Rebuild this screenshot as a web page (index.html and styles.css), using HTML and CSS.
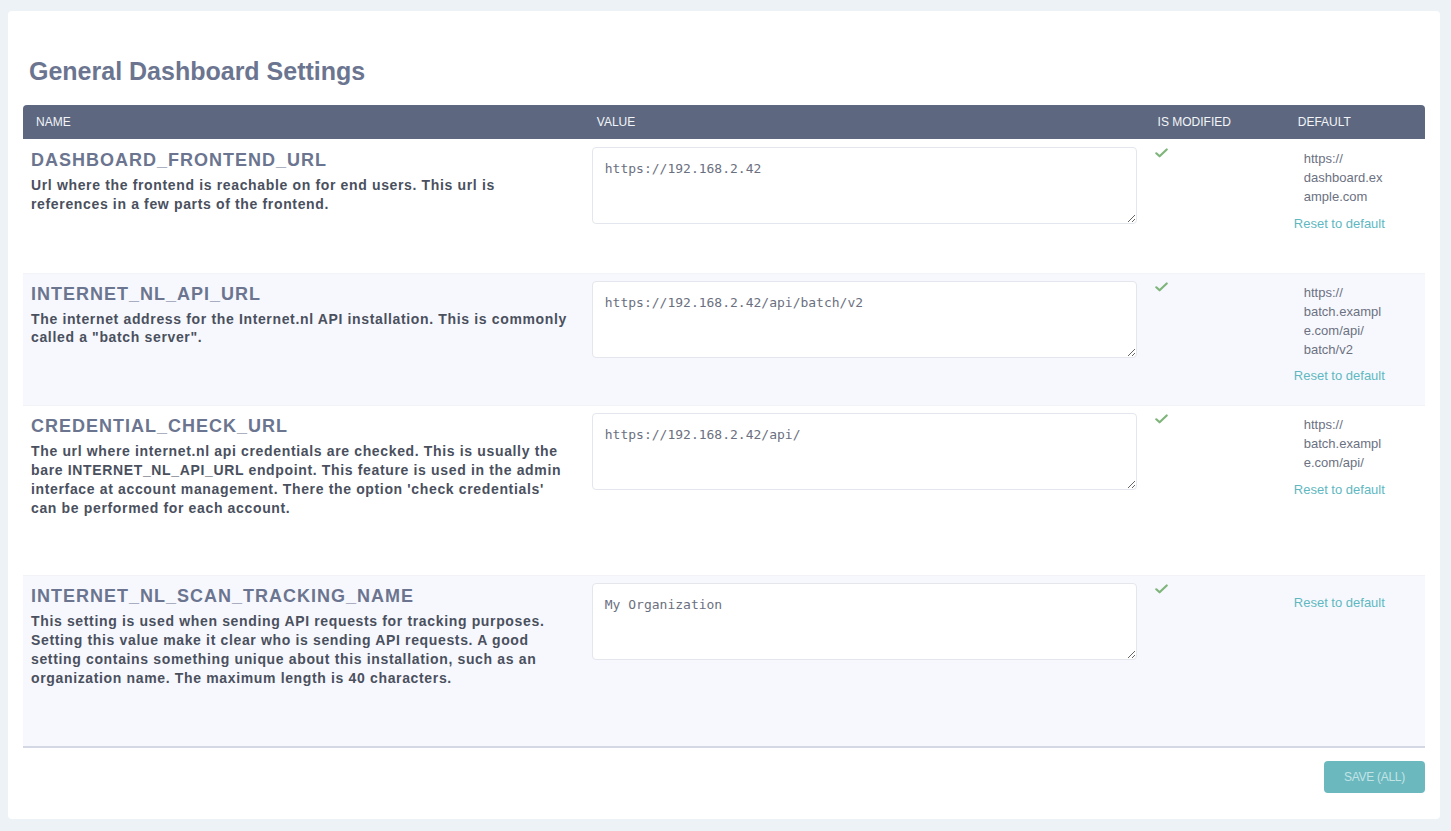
FILE: index.html
```html
<!DOCTYPE html>
<html lang="en">
<head>
<meta charset="utf-8">
<title>General Dashboard Settings</title>
<link rel="stylesheet" href="styles.css">
</head>
<body>
<div class="card">
  <h1 class="title">General Dashboard Settings</h1>
  <table class="settings">
    <colgroup>
      <col class="c-name"><col class="c-value"><col class="c-mod"><col class="c-def">
    </colgroup>
    <thead>
      <tr><th>Name</th><th>Value</th><th>Is modified</th><th>Default</th></tr>
    </thead>
    <tbody>
      <tr>
        <td class="name-cell">
          <div class="name">DASHBOARD_FRONTEND_URL</div>
          <div class="desc">Url where the frontend is reachable on for end users. This url is references in a few parts of the frontend.</div>
        </td>
        <td class="value-cell"><textarea class="value">https://192.168.2.42</textarea></td>
        <td class="mod-cell"><svg class="check" width="13" height="10" viewBox="0 0 13 10"><path d="M1.3 5.3 L4.6 8.3 L11.7 1.5" fill="none" stroke="#7fb57b" stroke-width="2.2" stroke-linecap="round" stroke-linejoin="round"/></svg></td>
        <td class="def-cell">
          <div class="def-value">https://<wbr>dashboard.example.com</div>
          <a class="reset" href="#">Reset to default</a>
        </td>
      </tr>
      <tr class="alt">
        <td class="name-cell">
          <div class="name">INTERNET_NL_API_URL</div>
          <div class="desc">The internet address for the Internet.nl API installation. This is commonly called a "batch server".</div>
        </td>
        <td class="value-cell"><textarea class="value">https://192.168.2.42/api/batch/v2</textarea></td>
        <td class="mod-cell"><svg class="check" width="13" height="10" viewBox="0 0 13 10"><path d="M1.3 5.3 L4.6 8.3 L11.7 1.5" fill="none" stroke="#7fb57b" stroke-width="2.2" stroke-linecap="round" stroke-linejoin="round"/></svg></td>
        <td class="def-cell">
          <div class="def-value">https://<wbr>batch.example.com/api/<wbr>batch/v2</div>
          <a class="reset" href="#">Reset to default</a>
        </td>
      </tr>
      <tr>
        <td class="name-cell">
          <div class="name">CREDENTIAL_CHECK_URL</div>
          <div class="desc">The url where internet.nl api credentials are checked. This is usually the bare INTERNET_NL_API_URL endpoint. This feature is used in the admin interface at account management. There the option 'check credentials' can be performed for each account.</div>
        </td>
        <td class="value-cell"><textarea class="value">https://192.168.2.42/api/</textarea></td>
        <td class="mod-cell"><svg class="check" width="13" height="10" viewBox="0 0 13 10"><path d="M1.3 5.3 L4.6 8.3 L11.7 1.5" fill="none" stroke="#7fb57b" stroke-width="2.2" stroke-linecap="round" stroke-linejoin="round"/></svg></td>
        <td class="def-cell">
          <div class="def-value">https://<wbr>batch.example.com/api/</div>
          <a class="reset" href="#">Reset to default</a>
        </td>
      </tr>
      <tr class="alt">
        <td class="name-cell">
          <div class="name">INTERNET_NL_SCAN_TRACKING_NAME</div>
          <div class="desc">This setting is used when sending API requests for tracking purposes. Setting this value make it clear who is sending API requests. A good setting contains something unique about this installation, such as an organization name. The maximum length is 40 characters.</div>
        </td>
        <td class="value-cell"><textarea class="value">My Organization</textarea></td>
        <td class="mod-cell"><svg class="check" width="13" height="10" viewBox="0 0 13 10"><path d="M1.3 5.3 L4.6 8.3 L11.7 1.5" fill="none" stroke="#7fb57b" stroke-width="2.2" stroke-linecap="round" stroke-linejoin="round"/></svg></td>
        <td class="def-cell">
          <div class="def-value"></div>
          <a class="reset" href="#">Reset to default</a>
        </td>
      </tr>
    </tbody>
  </table>
  <div class="actions">
    <button class="save" type="button">SAVE (ALL)</button>
  </div>
</div>
</body>
</html>
```

FILE: styles.css
```css
html, body {
  margin: 0;
  padding: 0;
}
body {
  background: #edf2f6;
  font-family: "Liberation Sans", Arial, Helvetica, sans-serif;
  padding: 11px 11px 13px 8px;
}
.card {
  background: #ffffff;
  border-radius: 4px;
  padding: 45px 15px 26px 15px;
}
.title {
  margin: 0 0 19px 6px;
  font-size: 25px;
  line-height: 30px;
  font-weight: bold;
  color: #6b7590;
}
.settings {
  width: 100%;
  border-collapse: separate;
  border-spacing: 0;
  table-layout: fixed;
  border-bottom: 2px solid #d3d8e4;
}
.c-name, .c-value { width: 40%; }
.c-mod, .c-def { width: 10%; }
.settings th {
  background: #5d6880;
  color: #f3f5f8;
  font-size: 12px;
  font-weight: normal;
  text-transform: uppercase;
  text-align: left;
  height: 34px;
  padding: 0 12px 0 13px;
  vertical-align: middle;
}
.settings th:first-child { border-top-left-radius: 4px; }
.settings th:last-child { border-top-right-radius: 4px; }
.settings td {
  vertical-align: top;
  border-top: 1px solid #f1f3f7;
}
.settings tbody tr:first-child td { border-top-color: #ffffff; }
.settings tr.alt td { background: #f7f8fd; }
.name-cell {
  padding: 8px 12px 58px 8px;
}
.settings tbody tr:first-child .name-cell { padding-bottom: 59px; }
.name {
  font-size: 18px;
  line-height: 24px;
  font-weight: bold;
  letter-spacing: 1px;
  color: #6b7590;
}
.desc {
  margin-top: 4px;
  font-size: 14px;
  line-height: 18.8px;
  font-weight: bold;
  letter-spacing: 0.65px;
  color: #4a505e;
}
.value-cell {
  padding: 7px 8px 8px 8px;
}
.value {
  display: block;
  width: 100%;
  height: 77px;
  box-sizing: border-box;
  margin: 0;
  padding: 13px 12px 12px 12px;
  border: 1px solid #e3e6ec;
  border-radius: 4px;
  background: #ffffff;
  font-family: "DejaVu Sans Mono", monospace;
  font-size: 13px;
  line-height: 15px;
  color: #6b7080;
}
.mod-cell {
  padding: 8px 10px 8px 10px;
}
.check { display: block; }
.def-cell {
  padding: 9px 8px 8px 9px;
}
.def-value {
  margin: 0 0 7.5px 10px;
  width: 82px;
  overflow-wrap: anywhere;
  font-size: 13px;
  line-height: 19px;
  color: #6c7182;
}
.reset {
  display: block;
  font-size: 13px;
  line-height: 19px;
  color: #5fb8c1;
  text-decoration: none;
  white-space: nowrap;
}
.actions {
  display: flex;
  justify-content: flex-end;
  margin-top: 13px;
}
.save {
  width: 101px;
  height: 32px;
  border: none;
  border-radius: 4px;
  background: #6bb8bf;
  color: #c2e4e6;
  font-family: "Liberation Sans", Arial, sans-serif;
  font-size: 12px;
  letter-spacing: -0.3px;
  padding: 0;
}
```
